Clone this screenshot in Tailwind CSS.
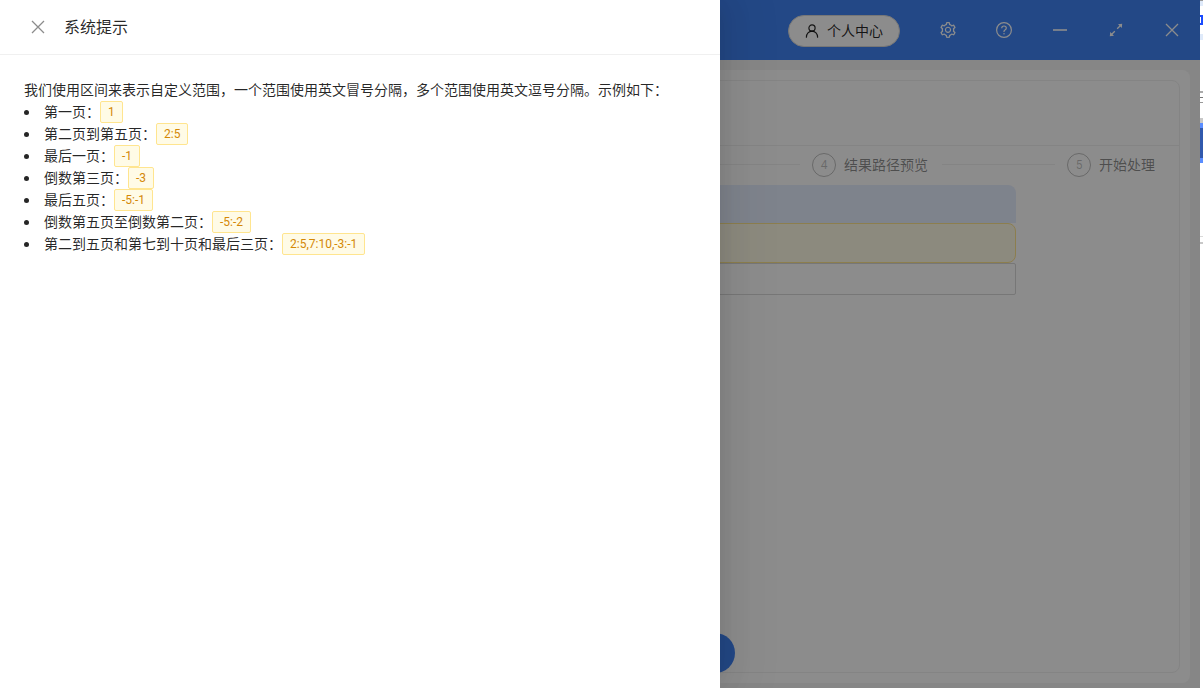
<!DOCTYPE html>
<html lang="zh-CN">
<head>
    <meta charset="UTF-8">
    <meta name="viewport" content="width=device-width, initial-scale=1.0">
    <title>系统提示</title>
    <script src="https://cdn.jsdelivr.net/npm/@tailwindcss/browser@4"></script>
</head>
<body class="flex h-screen overflow-hidden bg-white font-['Roboto','Noto_Sans_CJK_SC',sans-serif] text-sm text-black/85">

    <div class="relative flex min-w-0 flex-1 flex-col overflow-hidden bg-[#f5f5f5]">
        <!-- Title bar -->
        <header class="flex h-[60px] shrink-0 items-center justify-end bg-[#4084f5] text-white">
            <button type="button" class="mt-0.5 mr-5 flex h-8 items-center gap-2 rounded-full border border-[#d9d9d9] bg-white px-4 text-black/85">
                <svg class="size-[14px]" viewBox="0 0 14 14" fill="none" stroke="currentColor" stroke-width="1.2" stroke-linecap="round">
                    <circle cx="7" cy="4" r="3.1"/>
                    <path d="M1.4 13.2c0-3.3 2.4-6.1 5.6-6.1s5.6 2.8 5.6 6.1"/>
                </svg>
                <span>个人中心</span>
            </button>
            <button type="button" aria-label="设置" class="flex h-full w-14 items-center justify-center">
                <svg class="size-4" viewBox="64 64 896 896" fill="currentColor"><path d="M924.8 625.7l-65.5-56c3.1-19 4.7-38.4 4.7-57.8s-1.6-38.8-4.7-57.8l65.5-56a32.03 32.03 0 009.3-35.2l-.9-2.6a443.74 443.74 0 00-79.7-137.9l-1.8-2.1a32.12 32.12 0 00-35.1-9.5l-81.3 28.9c-30-24.6-63.5-44-99.7-57.6l-15.7-85a32.05 32.05 0 00-25.8-25.7l-2.7-.5c-52.1-9.4-106.9-9.4-159 0l-2.7.5a32.05 32.05 0 00-25.8 25.7l-15.8 85.4a351.86 351.86 0 00-99 57.4l-81.9-29.1a32 32 0 00-35.1 9.5l-1.8 2.1a446.02 446.02 0 00-79.7 137.9l-.9 2.6c-4.5 12.5-.8 26.5 9.3 35.2l66.3 56.6c-3.1 18.8-4.6 38-4.6 57.1 0 19.2 1.5 38.4 4.6 57.1L99 625.5a32.03 32.03 0 00-9.3 35.2l.9 2.6c18.1 50.4 44.9 96.9 79.7 137.9l1.8 2.1a32.12 32.12 0 0035.1 9.5l81.9-29.1c29.8 24.5 63.1 43.9 99 57.4l15.8 85.4a32.05 32.05 0 0025.8 25.7l2.7.5a449.4 449.4 0 00159 0l2.7-.5a32.05 32.05 0 0025.8-25.7l15.7-85a350 350 0 0099.7-57.6l81.3 28.9a32 32 0 0035.1-9.5l1.8-2.1c34.8-41.1 61.6-87.5 79.7-137.9l.9-2.6c4.5-12.3.8-26.3-9.3-35zM788.3 465.9c2.5 15.1 3.8 30.6 3.8 46.1s-1.3 31-3.8 46.1l-6.6 40.1 74.7 63.9a370.03 370.03 0 01-42.6 73.6L721 702.8l-31.4 25.8c-23.9 19.6-50.5 35-79.3 45.8l-38.1 14.3-17.9 97a377.5 377.5 0 01-85 0l-17.9-97.2-37.8-14.5c-28.5-10.8-55-26.2-78.7-45.7l-31.4-25.9-93.4 33.2c-17-22.9-31.2-47.6-42.6-73.6l75.5-64.5-6.5-40c-2.4-14.9-3.7-30.3-3.7-45.5 0-15.3 1.2-30.6 3.7-45.5l6.5-40-75.5-64.5c11.3-26.1 25.6-50.7 42.6-73.6l93.4 33.2 31.4-25.9c23.7-19.5 50.2-34.9 78.7-45.7l37.9-14.3 17.9-97.2c28.1-3.2 56.8-3.2 85 0l17.9 97 38.1 14.3c28.7 10.8 55.4 26.2 79.3 45.8l31.4 25.8 92.8-32.9c17 22.9 31.2 47.6 42.6 73.6L781.8 426l6.5 39.9zM512 326c-97.2 0-176 78.8-176 176s78.8 176 176 176 176-78.8 176-176-78.8-176-176-176zm0 288a112 112 0 110-224 112 112 0 010 224z"/></svg>
            </button>
            <button type="button" aria-label="帮助" class="flex h-full w-14 items-center justify-center">
                <svg class="size-4" viewBox="0 0 16 16" fill="none" stroke="currentColor" stroke-width="1.2">
                    <circle cx="8" cy="8" r="7.4"/>
                    <path d="M5.7 6.3c0-1.4 1-2.3 2.3-2.3s2.3.9 2.3 2.1c0 1-.7 1.6-1.4 2-.6.3-.9.7-.9 1.4v.4"/>
                    <circle cx="8" cy="11.7" r=".75" fill="currentColor" stroke="none"/>
                </svg>
            </button>
            <button type="button" aria-label="最小化" class="flex h-full w-14 items-center justify-center">
                <svg class="size-4" viewBox="0 0 16 16"><path d="M1 7h14v2H1z" fill="currentColor" opacity=".8"/></svg>
            </button>
            <button type="button" aria-label="最大化" class="flex h-full w-14 items-center justify-center">
                <svg class="size-4" viewBox="0 0 16 16" fill="none" stroke="currentColor" stroke-width="1.3">
                    <path d="M9.2 6.8l3.3-3.3M6.8 9.2l-3.3 3.3"/>
                    <path d="M10 2.2l4.2-.4-.4 4.200zM6 13.800l-4.200.4.4-4.200z" fill="currentColor" stroke="none"/>
                </svg>
            </button>
            <button type="button" aria-label="关闭" class="flex h-full w-14 items-center justify-center">
                <svg class="size-4" viewBox="0 0 16 16" fill="none" stroke="currentColor" stroke-width="1.3"><path d="M2 2l12 12M14 2L2 14"/></svg>
            </button>
        </header>

        <!-- Page -->
        <main class="m-2.5 mb-[5px] flex flex-1 flex-col rounded-lg bg-white p-2.5">
            <section class="flex flex-1 flex-col rounded-lg border border-[#f0f0f0]">
                <div class="h-[65px] shrink-0 border-b border-[#f0f0f0]"></div>
                <ol class="mb-0.5 flex h-[37px] shrink-0 items-center pr-6 text-black/45">
                    <li class="flex flex-1 items-center"><span class="mr-3 h-px flex-1 bg-[#f0f0f0]"></span></li>
                    <li class="flex items-center">
                        <span class="flex size-6 items-center justify-center rounded-full border border-black/25 text-xs text-black/25">4</span>
                        <span class="ml-2">结果路径预览</span>
                        <span class="mr-3 ml-3.5 h-px w-[113px] bg-[#f0f0f0]"></span>
                    </li>
                    <li class="flex items-center">
                        <span class="flex size-6 items-center justify-center rounded-full border border-black/25 text-xs text-black/25">5</span>
                        <span class="ml-2">开始处理</span>
                    </li>
                </ol>
                <div class="mr-[163px] flex flex-col">
                    <div class="h-[38px] rounded-t-lg bg-[#e6eeff]"></div>
                    <div class="h-10 rounded-lg border border-[#ffe58f] bg-[#fffbe6]"></div>
                    <input type="text" aria-label="页码范围" class="h-8 rounded-xs border border-[#d9d9d9] bg-white px-3">
                </div>
            </section>
        </main>
        <button type="button" aria-label="下一步" class="absolute bottom-[15px] left-[695px] size-10 rounded-full bg-[#4084f5]"></button>

        <!-- Mask -->
        <div class="absolute inset-0 bg-black/45"></div>

        <!-- Drawer -->
        <aside role="dialog" aria-labelledby="drawerTitle" class="absolute inset-y-0 left-0 w-3/5 bg-white shadow-[6px_0_16px_-8px_rgba(0,0,0,0.08),9px_0_28px_0_rgba(0,0,0,0.05),12px_0_48px_16px_rgba(0,0,0,0.03)]">
            <div class="flex h-[55px] items-center border-b border-[#f0f0f0] px-[30px]">
                <button type="button" aria-label="关闭提示" class="mr-[18px] text-black/45">
                    <svg class="size-4" viewBox="0 0 16 16" fill="none" stroke="currentColor" stroke-width="1.3"><path d="M2 2l12 12M14 2L2 14"/></svg>
                </button>
                <h1 id="drawerTitle" class="pt-0.5 text-base leading-[22px]">系统提示</h1>
            </div>
            <div class="p-6 leading-[22px]">
                <p>我们使用区间来表示自定义范围，一个范围使用英文冒号分隔，多个范围使用英文逗号分隔。示例如下：</p>
                <ul class="[&_code]:rounded-xs [&_code]:border [&_code]:border-[#ffe58f] [&_code]:bg-[#fffbe6] [&_code]:px-[7px] [&_code]:font-['Roboto',sans-serif] [&_code]:text-xs [&_code]:leading-5 [&_code]:text-[#d48806] [&_li]:flex [&_li]:h-[22px] [&_li]:items-center [&_li]:before:mr-[15px] [&_li]:before:size-[5px] [&_li]:before:rounded-full [&_li]:before:bg-black/85 [&_li]:before:content-['']">
                    <li>第一页：<code>1</code></li>
                    <li>第二页到第五页：<code>2:5</code></li>
                    <li>最后一页：<code>-1</code></li>
                    <li>倒数第三页：<code>-3</code></li>
                    <li>最后五页：<code>-5:-1</code></li>
                    <li>倒数第五页至倒数第二页：<code>-5:-2</code></li>
                    <li>第二到五页和第七到十页和最后三页：<code>2:5,7:10,-3:-1</code></li>
                </ul>
            </div>
        </aside>
    </div>

    <!-- Window behind -->
    <div class="flex w-[3px] shrink-0 flex-col overflow-hidden bg-white" aria-hidden="true">
        <div class="h-px bg-[#999999]"></div>
        <div class="h-[5px] bg-[#dfeafa]"></div>
        <div class="flex h-7 flex-col items-end justify-center"><span class="h-[2px] w-[3px] bg-[#1a4bff]"></span><span class="h-[6px] w-[2px] bg-[#1a4bff]"></span><span class="h-[2px] w-[3px] bg-[#1a4bff]"></span></div>
        <div class="h-1.5 bg-[#dfeafa]"></div>
        <div class="mt-[51px] h-[2px] bg-[#aaaaaa]"></div>
        <div class="mt-1 h-px bg-[#777777]"></div>
        <div class="mt-1 h-px bg-[#999999]"></div>
        <div class="mt-[15px] h-[5px] bg-[#c8c8c8]"></div>
        <div class="h-10 border-y-[5px] border-[#5a8dff] bg-[#3159ad]"></div>
        <div class="mt-[73px] h-px bg-[#d9d9d9]"></div>
        <div class="mt-[5px] h-[2px] bg-[#c8c8c8]"></div>
    </div>
</body>
</html>
